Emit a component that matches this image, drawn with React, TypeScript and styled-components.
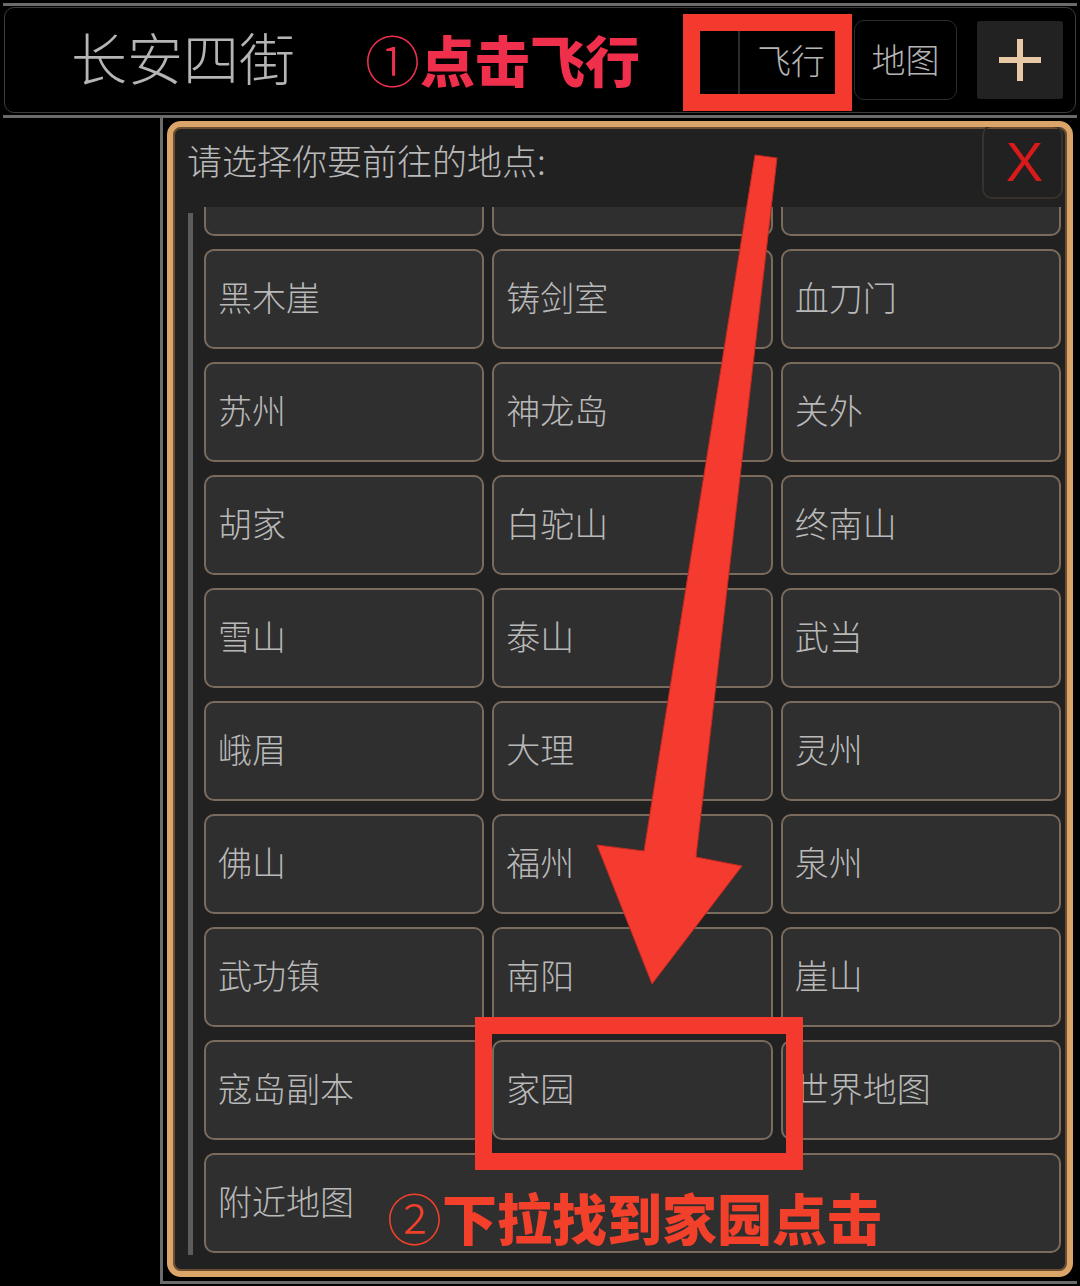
import React from 'react';
import styled, { createGlobalStyle } from 'styled-components';

const PLACES: string[][] = [
  ['', '', ''],
  ['黑木崖', '铸剑室', '血刀门'],
  ['苏州', '神龙岛', '关外'],
  ['胡家', '白驼山', '终南山'],
  ['雪山', '泰山', '武当'],
  ['峨眉', '大理', '灵州'],
  ['佛山', '福州', '泉州'],
  ['武功镇', '南阳', '崖山'],
  ['寇岛副本', '家园', '世界地图'],
];

const App: React.FunctionComponent = () => (
  <Page>
    <GlobalStyle />
    <TopFrame>
      <Bar>
        <Title>长安四街</Title>
        <TopHint $color="#ef2f4c">
          <CircleNum>①</CircleNum>点击飞行
        </TopHint>
        <BarActions>
          <Highlight>
            <Tabs>
              <BlankTab />
              <ActiveTab>飞行</ActiveTab>
            </Tabs>
          </Highlight>
          <MapButton>地图</MapButton>
          <PlusButton>
            <svg width="44" height="44" viewBox="0 0 44 44">
              <path d="M22 1v42M1 22h42" stroke="#e8c9a6" strokeWidth="6" />
            </svg>
          </PlusButton>
        </BarActions>
      </Bar>
    </TopFrame>

    <Body>
      <Spacer />
      <Frame>
        <Dialog>
          <DialogHeader>
            <DialogTitle>请选择你要前往的地点:</DialogTitle>
            <CloseButton>X</CloseButton>
          </DialogHeader>
          <ScrollArea>
            <Scrollbar />
            <Viewport>
              <PlaceGrid>
                {PLACES.flatMap((row, r) =>
                  row.map((name, c) => <PlaceButton key={`${r}-${c}`}>{name}</PlaceButton>),
                )}
                <PlaceButton $wide>附近地图</PlaceButton>
              </PlaceGrid>
            </Viewport>
          </ScrollArea>
        </Dialog>
      </Frame>
    </Body>

    {/* tutorial annotations drawn over the screen */}
    <ArrowLayer width="1080" height="1286" viewBox="0 0 1080 1286">
      <path
        d="M755 155 L777 158 L696 857 L742 866 L652 984 L597 845 L644 851 Z"
        fill="#f53b30"
        stroke="#c02a20"
        strokeWidth="1"
      />
    </ArrowLayer>
    <HomeBox />
    <BottomHint $color="#f2402b">
      <CircleNum>②</CircleNum>下拉找到家园点击
    </BottomHint>
  </Page>
);

const GlobalStyle = createGlobalStyle`
  html, body {
    margin: 0;
    padding: 0;
    background: #000;
  }
  body {
    font-family: 'Noto Sans CJK SC', 'Noto Sans', sans-serif;
  }
`;

const Page = styled.div`
  position: relative;
  width: 1080px;
  height: 1286px;
  padding-top: 3px;
  box-sizing: border-box;
  overflow: hidden;
  background: #000;
`;

const TopFrame = styled.div`
  margin: 0 3px;
  padding: 1px 1px 2px;
  border-top: 3px solid #6b6b6b;
  border-bottom: 3px solid #6b6b6b;
`;

const Bar = styled.div`
  display: flex;
  align-items: center;
  height: 106px;
  box-sizing: border-box;
  padding: 0 12px 0 66px;
  border: 1.5px solid #3c3c3c;
  border-radius: 10px;
`;

const Title = styled.div`
  margin-bottom: 8px;
  color: #b5b5b5;
  font-size: 56px;
  font-weight: 300;
  line-height: 1;
`;

const Hint = styled.div<{ $color: string }>`
  display: flex;
  align-items: center;
  color: ${({ $color }) => $color};
  font-size: 55px;
  font-weight: 900;
  line-height: 1;
  white-space: nowrap;
`;

const TopHint = styled(Hint)`
  margin: 0 0 4px 70px;
`;

const CircleNum = styled.span`
  font-weight: 300;
  font-size: 55px;
`;

const BarActions = styled.div`
  display: flex;
  align-items: center;
  margin-left: auto;
`;

const Highlight = styled.div`
  display: flex;
  border: 17px solid #f43a2e;
  margin-top: 4px;
`;

const Tabs = styled.div`
  display: flex;
  width: 135px;
  height: 63px;
  background: #000;
`;

const BlankTab = styled.div`
  width: 38px;
  border-right: 2px solid #2c2c2c;
`;

const ActiveTab = styled.div`
  display: flex;
  align-items: center;
  flex: 1;
  padding: 0 0 6px 17px;
  color: #b5b5b5;
  font-size: 34px;
  font-weight: 300;
`;

const MapButton = styled.div`
  display: flex;
  align-items: center;
  justify-content: center;
  width: 103px;
  height: 80px;
  box-sizing: border-box;
  margin-left: 2px;
  padding-bottom: 4px;
  border: 1.5px solid #2c2c2c;
  border-radius: 10px;
  color: #b5b5b5;
  font-size: 34px;
  font-weight: 300;
`;

const PlusButton = styled.div`
  display: flex;
  align-items: center;
  justify-content: center;
  width: 86px;
  height: 78px;
  margin-left: 20px;
  border-radius: 3px;
  background: #222;
`;

const Body = styled.div`
  display: flex;
  height: 1166px;
  margin: 0 3px;
`;

const Spacer = styled.div`
  width: 157px;
  flex-shrink: 0;
`;

const Frame = styled.div`
  flex: 1;
  display: flex;
  padding: 3px 4px 4px;
  border-left: 3px solid #6b6b6b;
  border-bottom: 3px solid #6b6b6b;
`;

const Dialog = styled.div`
  flex: 1;
  display: flex;
  flex-direction: column;
  box-sizing: border-box;
  border: 6px solid #dba468;
  border-radius: 14px;
  background: #212121;
  box-shadow: inset 0 0 0 2px #6b4d31;
  overflow: hidden;
`;

const DialogHeader = styled.div`
  display: flex;
  justify-content: space-between;
  align-items: flex-start;
  height: 80px;
  flex-shrink: 0;
  padding-left: 14px;
`;

const DialogTitle = styled.div`
  margin-top: 15px;
  color: #b9b9b9;
  font-size: 35px;
  font-weight: 300;
  line-height: 1;
`;

const CloseButton = styled.div`
  display: flex;
  align-items: center;
  justify-content: center;
  width: 81px;
  height: 74px;
  box-sizing: border-box;
  margin: -2px 4px 0 0;
  padding-left: 4px;
  border: 2px solid #37322c;
  border-radius: 10px;
  color: #d91a1a;
  font-family: 'Liberation Sans', Arial, sans-serif;
  font-size: 56px;
  line-height: 1;
`;

const ScrollArea = styled.div`
  flex: 1;
  display: flex;
  min-height: 0;
  padding: 0 6px 0 15px;
`;

const Scrollbar = styled.div`
  width: 5px;
  flex-shrink: 0;
  margin: 6px 11px 16px 0;
  background: #5c5c5c;
`;

const Viewport = styled.div`
  flex: 1;
  overflow: hidden;
`;

const PlaceGrid = styled.div`
  display: grid;
  grid-template-columns: repeat(3, 1fr);
  grid-auto-rows: 100px;
  column-gap: 8px;
  row-gap: 13px;
  margin-top: -71px;
`;

const PlaceButton = styled.div<{ $wide?: boolean }>`
  display: flex;
  align-items: center;
  grid-column: ${({ $wide }) => ($wide ? '1 / -1' : 'auto')};
  box-sizing: border-box;
  padding: 0 0 6px 12px;
  border: 2px solid #7a6b5d;
  border-radius: 10px;
  background: #2f2f2f;
  color: #b9b9b9;
  font-size: 34px;
  font-weight: 300;
`;

const ArrowLayer = styled.svg`
  position: absolute;
  left: 0;
  top: 0;
  pointer-events: none;
`;

const HomeBox = styled.div`
  position: absolute;
  left: 475px;
  top: 1017px;
  width: 328px;
  height: 153px;
  box-sizing: border-box;
  border: 17px solid #f43a2e;
  pointer-events: none;
`;

const BottomHint = styled(Hint)`
  position: absolute;
  left: 387px;
  top: 1189px;
`;

export default App;
